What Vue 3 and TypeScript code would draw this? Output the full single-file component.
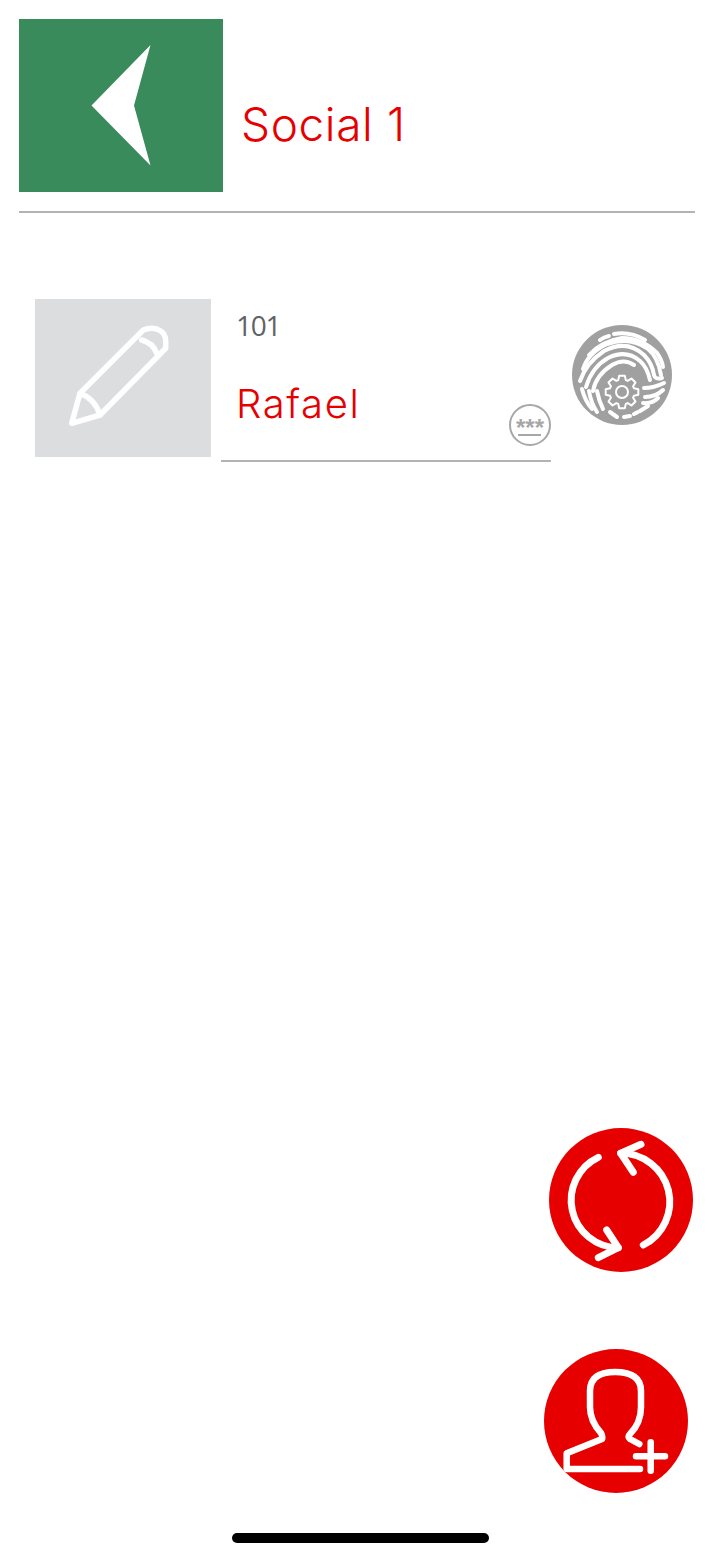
<template>
  <div class="screen">
    <header class="head">
      <button class="back" type="button" aria-label="Back">
        <svg width="204" height="173" viewBox="0 0 204 173">
          <path d="M131.5 26 72.5 86.5 131.5 146.5 115 86.5Z" fill="#fff" />
        </svg>
      </button>
      <h1 class="title">Social 1</h1>
    </header>

    <section class="item">
      <div class="edit">
        <svg width="176" height="158" viewBox="0 0 176 158" fill="none" stroke="#fff" stroke-width="5.5" stroke-linejoin="round" stroke-linecap="round">
          <path d="M36.7 124.3 45 94.3 108.3 31Q115 28 121.7 30 130.7 33 130.7 42V49.3L65 116Z" />
          <path d="M45 94.3Q60 100 65 116" />
          <path d="M106.7 41Q118 44 121.7 54.3" />
        </svg>
      </div>
      <div class="field">
        <div class="num">101</div>
        <div class="name">Rafael</div>
        <svg class="pass" width="44" height="44" viewBox="0 0 44 44">
          <circle cx="22" cy="22" r="20" fill="none" stroke="#a7a7a7" stroke-width="2" />
          <text x="22" y="33" text-anchor="middle" class="stars">***</text>
          <path d="M10 32H33" stroke="#a7a7a7" stroke-width="2" />
        </svg>
      </div>
      <svg class="finger" width="100" height="100" viewBox="0 0 100 100">
        <circle cx="50" cy="50" r="50" fill="#a0a0a0" />
        <g fill="none" stroke="#fff" stroke-width="4" stroke-linecap="round">
          <path d="M28 15Q32 12 37 11" />
          <path d="M42 9Q58 6 73 15" />
          <path d="M17 30Q30 16 50 13 70 13 85 28 90 35 91 42" />
          <path d="M11 44Q16 28 35 19 58 11 76 24 86 32 89 50" />
          <path d="M8 56Q14 38 32 26 55 14 72 30 80 38 82 50 83 55 90 53" />
          <path d="M14 62Q20 42 36 33 54 24 68 36 75 42 78 55" />
          <path d="M21 66Q24 50 40 40 52 33 62 40" />
          <path d="M72 63Q82 63 92 58" />
          <path d="M73 72Q84 72 91 65" />
          <path d="M71 78Q80 79 86 73" />
          <path d="M68 86 76 81" />
          <path d="M10 64Q13 76 20 84" />
          <path d="M17 66Q19 78 25 87" />
          <path d="M25 66Q27 76 31 84" />
          <path d="M38 87 45 92" />
          <path d="M52 92 58 91" />
          <path d="M62 89 66 87" />
        </g>
        <path :d="gearPath" fill="#a0a0a0" stroke="#fff" stroke-width="2" stroke-linejoin="round" />
        <circle cx="50" cy="67" r="6" fill="none" stroke="#fff" stroke-width="2" />
      </svg>
    </section>

    <button class="fab sync" type="button" aria-label="Sync">
      <svg width="144" height="144" viewBox="0 0 144 144" fill="none" stroke="#fff" stroke-width="7" stroke-linecap="round" stroke-linejoin="round">
        <path d="M49.3 29.3A47.5 47.5 0 0 0 69.3 119.7" />
        <path d="M57.7 102 69.3 119.7 49.3 129.7" />
        <path d="M94.3 117A48.5 48.5 0 0 0 71.7 25.3" />
        <path d="M92 16.3 71.7 25.3 84.3 44.3" />
      </svg>
    </button>
    <button class="fab add" type="button" aria-label="Add user">
      <svg width="144" height="144" viewBox="0 0 144 144" fill="none" stroke="#fff" stroke-width="6.5" stroke-linecap="round" stroke-linejoin="round">
        <path d="M96 120H22.7V104.3L58 90Q59 88 57 84 46 72 46 58V42Q46 23 71 23 97 23 97 42V58Q97 74 86 85 83 88 86 90L95.3 95" />
        <path d="M92 107.3H121M106.7 93.3V121.7" />
      </svg>
    </button>
    <div class="home-bar"></div>
  </div>
</template>

<script setup lang="ts">
// gear outline for the fingerprint badge
const teeth = 8;
const gearPath = (() => {
  const pts: string[] = [];
  for (let i = 0; i < teeth; i++) {
    const base = (i * 2 * Math.PI) / teeth - Math.PI / 2;
    const step = (2 * Math.PI) / teeth;
    const corners: [number, number][] = [
      [12.5, -0.36],
      [16.5, -0.2],
      [16.5, 0.2],
      [12.5, 0.36],
    ];
    for (const [r, f] of corners) {
      const a = base + f * step * 1.1;
      pts.push(`${(50 + r * Math.cos(a)).toFixed(1)} ${(67 + r * Math.sin(a)).toFixed(1)}`);
    }
  }
  return `M${pts.join("L")}Z`;
})();
</script>

<style>
html,
body {
  background: #fff;
}
</style>

<style scoped>
.screen {
  position: relative;
  height: 1558px;
  padding: 19px 25px 0 19px;
  box-sizing: border-box;
  overflow: hidden;
  background: #fff;
}

.head {
  display: flex;
  align-items: flex-start;
  gap: 18px;
  height: 192px;
  border-bottom: 2px solid #b3b3b3;
  box-sizing: content-box;
}

.back {
  flex: none;
  width: 204px;
  height: 173px;
  padding: 0;
  border: 0;
  background: #3a8b5c;
}

.back svg,
.edit svg,
.fab svg {
  display: block;
}

.title {
  margin: 72px 0 0;
  font: 300 46px/66px Inter, "Liberation Sans", sans-serif;
  letter-spacing: 0.6px;
  color: #e60000;
}

.item {
  display: flex;
  align-items: flex-start;
  margin: 86px 0 0 16px;
}

.edit {
  flex: none;
  width: 176px;
  height: 158px;
  background: #dcddde;
}

.field {
  position: relative;
  width: 330px;
  height: 163px;
  margin-left: 10px;
  padding-left: 15px;
  box-sizing: border-box;
  border-bottom: 2px solid #b3b3b3;
}

.num {
  margin-top: 7px;
  font: 400 28px/38px "Open Sans", "Liberation Sans", sans-serif;
  letter-spacing: -1.2px;
  color: #616265;
}

.name {
  margin-top: 32px;
  font: 300 40px/56px Inter, "Liberation Sans", sans-serif;
  letter-spacing: 1.6px;
  color: #e60000;
}

.pass {
  position: absolute;
  right: -1px;
  top: 104px;
}

.stars {
  font: 700 24px "Liberation Sans", sans-serif;
  fill: #a7a7a7;
}

.finger {
  flex: none;
  margin: 26px 0 0 21px;
}

.fab {
  position: absolute;
  width: 144px;
  height: 144px;
  padding: 0;
  border: 0;
  border-radius: 50%;
  background: #e60000;
}

.sync {
  left: 549px;
  top: 1128px;
}

.add {
  left: 544px;
  top: 1349px;
}

.home-bar {
  position: absolute;
  left: 232px;
  bottom: 15px;
  width: 257px;
  height: 10px;
  border-radius: 5px;
  background: #000;
}
</style>
